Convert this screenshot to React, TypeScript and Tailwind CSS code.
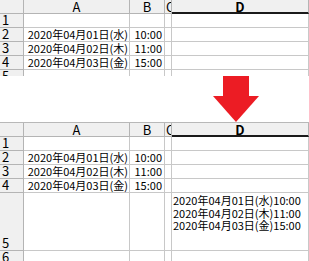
import React from "react";

type Row = { label: string; h: number; a?: string; b?: string; d?: string[] };

const topRows: Row[] = [
  { label: "1", h: 14 },
  { label: "2", h: 14, a: "2020年04月01日(水)", b: "10:00" },
  { label: "3", h: 14, a: "2020年04月02日(木)", b: "11:00" },
  { label: "4", h: 14, a: "2020年04月03日(金)", b: "15:00" },
  { label: "5", h: 14 },
];

const bottomRows: Row[] = [
  { label: "1", h: 14 },
  { label: "2", h: 14, a: "2020年04月01日(水)", b: "10:00" },
  { label: "3", h: 14, a: "2020年04月02日(木)", b: "11:00" },
  { label: "4", h: 14, a: "2020年04月03日(金)", b: "15:00" },
  {
    label: "5",
    h: 58,
    d: [
      "2020年04月01日(水)10:00",
      "2020年04月02日(木)11:00",
      "2020年04月03日(金)15:00",
    ],
  },
  { label: "6", h: 14 },
];

function Sheet({ rows }: { rows: Row[] }) {
  return (
    <div className="border-t border-t-[#b8b8b8]">
      <div className="flex h-[14px]">
        <div className="w-[24px] h-[14px] box-border bg-[#f0f0f0] border-r border-b border-[#b4b4b4]" />
        <div className="w-[106px] h-[14px] box-border bg-[#f0f0f0] border-r border-b border-[#b4b4b4] flex items-center justify-center text-[13px] leading-none">
          A
        </div>
        <div className="w-[35px] h-[14px] box-border bg-[#f0f0f0] border-r border-b border-[#b4b4b4] flex items-center justify-center text-[13px] leading-none">
          B
        </div>
        <div className="w-[7px] h-[14px] box-border bg-[#f0f0f0] border-r border-b border-[#b4b4b4] overflow-hidden flex items-center text-[13px] leading-none pl-px">
          C
        </div>
        <div className="w-[137px] h-[14px] box-border bg-[#f0f0f0] border-r border-[#b4b4b4] border-b-2 border-b-[#1a1a1a] flex items-center justify-center text-[13px] leading-none font-bold">
          D
        </div>
      </div>
      {rows.map((r) => (
        <div key={r.label} className="flex" style={{ height: r.h }}>
          <div className="w-[24px] h-full box-border bg-[#f0f0f0] border-r border-b border-[#b4b4b4] flex items-end pl-[2px] pb-[1px] text-[13px] leading-none overflow-hidden">
            {r.label}
          </div>
          <div className="w-[106px] h-full box-border border-r border-b border-[#c8c8c8] flex items-center justify-end pr-px text-[11px] leading-none whitespace-nowrap">
            {r.a ?? ""}
          </div>
          <div className="w-[35px] h-full box-border border-r border-b border-[#c8c8c8] flex items-center justify-end pr-[2px] text-[11px] leading-none whitespace-nowrap">
            {r.b ?? ""}
          </div>
          <div className="w-[7px] h-full box-border border-r border-b border-[#c8c8c8]" />
          <div className="w-[137px] h-full box-border border-r border-b border-[#c8c8c8] pl-px pt-[1px] text-[11px] leading-[12.5px] whitespace-nowrap">
            {r.d?.map((t) => (
              <div key={t}>{t}</div>
            ))}
          </div>
        </div>
      ))}
    </div>
  );
}

export default function App() {
  return (
    <div className="w-[309px] h-[261px] bg-white overflow-hidden text-black font-['Noto_Sans_CJK_JP',sans-serif]">
      <div className="h-[76px] overflow-hidden">
        <div className="-mt-px">
          <Sheet rows={topRows} />
        </div>
      </div>
      <div className="h-[46px] flex">
        <svg className="ml-[213px]" width="46" height="46" viewBox="0 0 46 46">
          <rect x="10" y="0" width="26" height="21" fill="#ec1c24" />
          <polygon points="0,20 46,20 23,46" fill="#ec1c24" />
        </svg>
      </div>
      <div className="h-[139px] overflow-hidden">
        <Sheet rows={bottomRows} />
      </div>
    </div>
  );
}
